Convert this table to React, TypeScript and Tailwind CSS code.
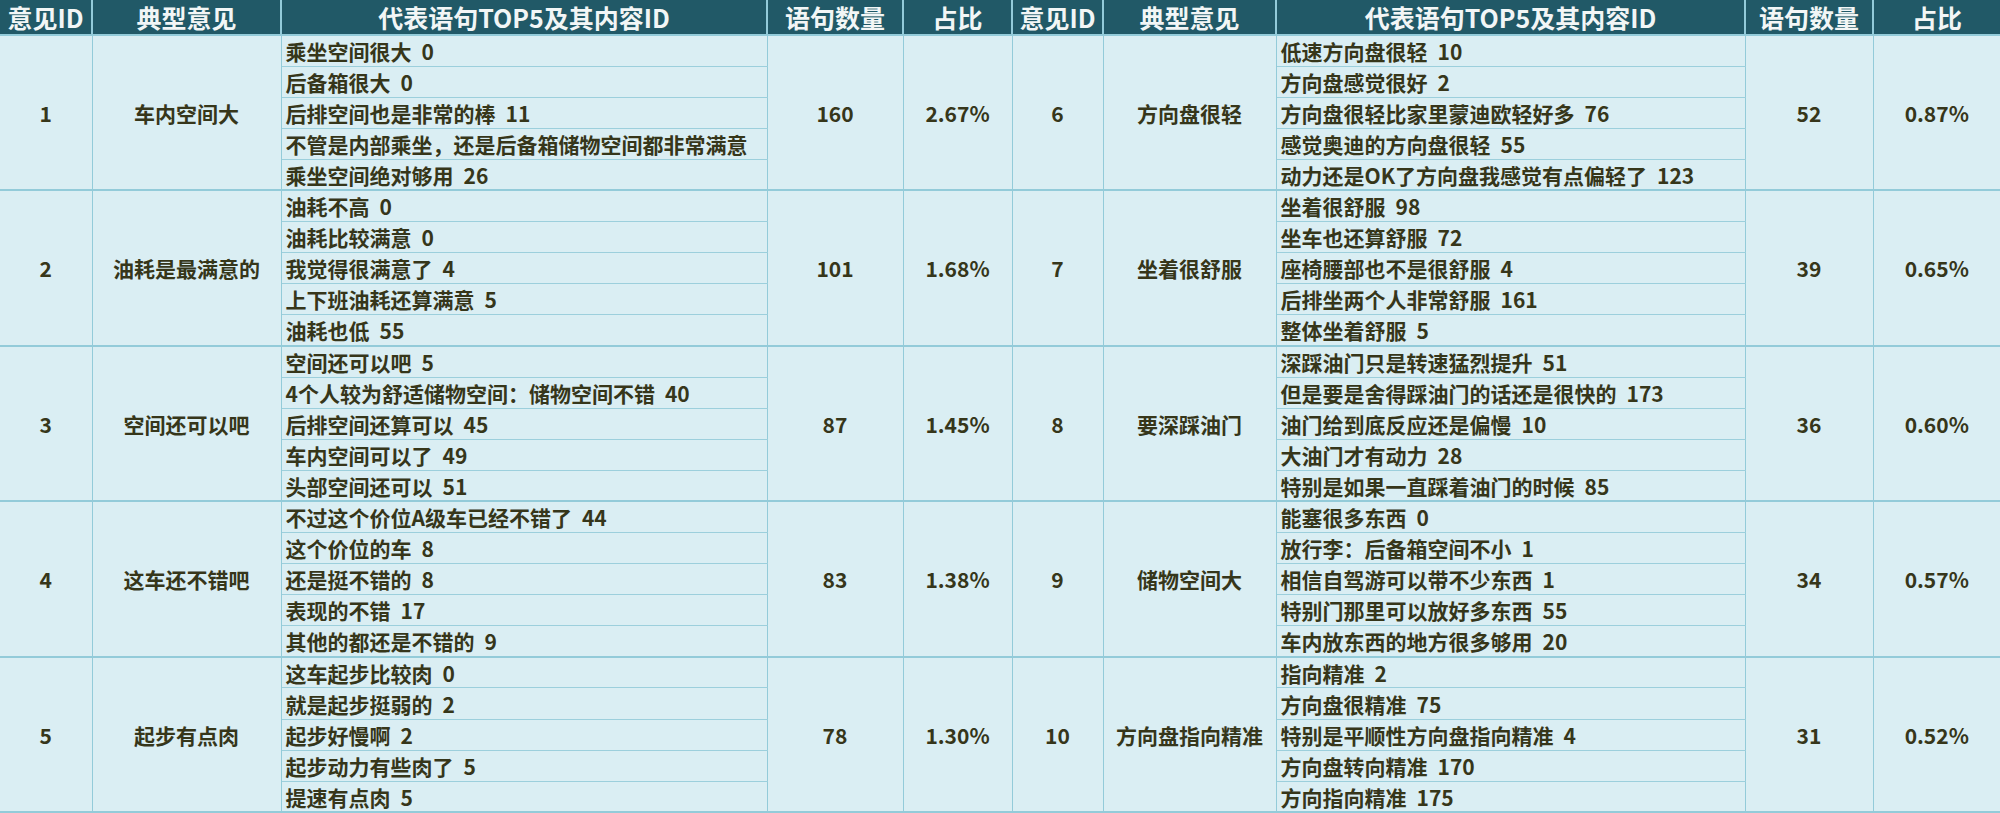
type Group = {
  id: number;
  title: string;
  lines: string[];
  count: number;
  pct: string;
};

const left: Group[] = [
  {
    id: 1,
    title: '车内空间大',
    lines: ['乘坐空间很大 0', '后备箱很大 0', '后排空间也是非常的棒 11', '不管是内部乘坐，还是后备箱储物空间都非常满意', '乘坐空间绝对够用 26'],
    count: 160,
    pct: '2.67%',
  },
  {
    id: 2,
    title: '油耗是最满意的',
    lines: ['油耗不高 0', '油耗比较满意 0', '我觉得很满意了 4', '上下班油耗还算满意 5', '油耗也低 55'],
    count: 101,
    pct: '1.68%',
  },
  {
    id: 3,
    title: '空间还可以吧',
    lines: ['空间还可以吧 5', '4个人较为舒适储物空间：储物空间不错 40', '后排空间还算可以 45', '车内空间可以了 49', '头部空间还可以 51'],
    count: 87,
    pct: '1.45%',
  },
  {
    id: 4,
    title: '这车还不错吧',
    lines: ['不过这个价位A级车已经不错了 44', '这个价位的车 8', '还是挺不错的 8', '表现的不错 17', '其他的都还是不错的 9'],
    count: 83,
    pct: '1.38%',
  },
  {
    id: 5,
    title: '起步有点肉',
    lines: ['这车起步比较肉 0', '就是起步挺弱的 2', '起步好慢啊 2', '起步动力有些肉了 5', '提速有点肉 5'],
    count: 78,
    pct: '1.30%',
  },
];

const right: Group[] = [
  {
    id: 6,
    title: '方向盘很轻',
    lines: ['低速方向盘很轻 10', '方向盘感觉很好 2', '方向盘很轻比家里蒙迪欧轻好多 76', '感觉奥迪的方向盘很轻 55', '动力还是OK了方向盘我感觉有点偏轻了 123'],
    count: 52,
    pct: '0.87%',
  },
  {
    id: 7,
    title: '坐着很舒服',
    lines: ['坐着很舒服 98', '坐车也还算舒服 72', '座椅腰部也不是很舒服 4', '后排坐两个人非常舒服 161', '整体坐着舒服 5'],
    count: 39,
    pct: '0.65%',
  },
  {
    id: 8,
    title: '要深踩油门',
    lines: ['深踩油门只是转速猛烈提升 51', '但是要是舍得踩油门的话还是很快的 173', '油门给到底反应还是偏慢 10', '大油门才有动力 28', '特别是如果一直踩着油门的时候 85'],
    count: 36,
    pct: '0.60%',
  },
  {
    id: 9,
    title: '储物空间大',
    lines: ['能塞很多东西 0', '放行李：后备箱空间不小 1', '相信自驾游可以带不少东西 1', '特别门那里可以放好多东西 55', '车内放东西的地方很多够用 20'],
    count: 34,
    pct: '0.57%',
  },
  {
    id: 10,
    title: '方向盘指向精准',
    lines: ['指向精准 2', '方向盘很精准 75', '特别是平顺性方向盘指向精准 4', '方向盘转向精准 170', '方向指向精准 175'],
    count: 31,
    pct: '0.52%',
  },
];

const headers = ['意见ID', '典型意见', '代表语句TOP5及其内容ID', '语句数量', '占比'];
const widths = ['w-[92px]', 'w-[189px]', 'w-[486px]', 'w-[136px]', 'w-[109px]', 'w-[91px]', 'w-[173px]', 'w-[469px]', 'w-[128px]', 'w-[127px]'];

// merged cells for a group (id, title / count, pct)
function spanCell(content: string | number, extra = '') {
  return (
    <td
      rowSpan={5}
      className={`border-b-2 border-r border-solid border-[#93cbd9] text-center align-middle ${extra}`}
    >
      {content}
    </td>
  );
}

// the sentence and its content id sit a little apart, as in the sheet
function lineCell(text: string, last: boolean) {
  const cut = text.lastIndexOf(' ');
  const body = cut > 0 ? text.slice(0, cut) : text;
  const num = cut > 0 ? text.slice(cut + 1) : '';
  return (
    <td
      className={`border-r border-l border-solid border-[#93cbd9] pl-[4px] whitespace-nowrap overflow-hidden text-left align-middle ${
        last ? 'border-b-2' : 'border-b border-b-[#9ccfdc] border-dashed'
      }`}
    >
      {body}
      {num && <span className="ml-[10px]">{num}</span>}
    </td>
  );
}

export default function App() {
  const rows = [];
  for (let i = 0; i < 25; i++) {
    const g = Math.floor(i / 5);
    const j = i % 5;
    const l = left[g];
    const r = right[g];
    const last = j === 4;
    rows.push(
      <tr key={i} className="h-[31.1px]">
        {j === 0 && spanCell(l.id, 'border-r-dotted')}
        {j === 0 && spanCell(l.title)}
        {lineCell(l.lines[j], last)}
        {j === 0 && spanCell(l.count)}
        {j === 0 && spanCell(l.pct)}
        {j === 0 && spanCell(r.id)}
        {j === 0 && spanCell(r.title)}
        {lineCell(r.lines[j], last)}
        {j === 0 && spanCell(r.count)}
        {j === 0 && spanCell(r.pct, 'border-r-0')}
      </tr>
    );
  }

  return (
    <div className="w-[2000px] h-[813px] bg-[#daeef3] overflow-hidden font-['Noto_Sans_CJK_SC',sans-serif] text-[#36361a]">
      <table className="w-[2000px] table-fixed border-collapse text-[21px] font-bold leading-[28px]">
        <colgroup>
          {widths.map((w, k) => (
            <col key={k} className={w} />
          ))}
        </colgroup>
        <thead>
          <tr className="h-[35px] bg-[#215967] text-[#f2f6f6]">
            {[...headers, ...headers].map((h, k) => (
              <th
                key={k}
                className="p-0 border-r-2 border-b-2 border-[#93cbd9] last:border-r-0 text-center align-middle text-[25px] leading-[33px] font-bold whitespace-nowrap"
              >
                {h}
              </th>
            ))}
          </tr>
        </thead>
        <tbody>{rows}</tbody>
      </table>
    </div>
  );
}
